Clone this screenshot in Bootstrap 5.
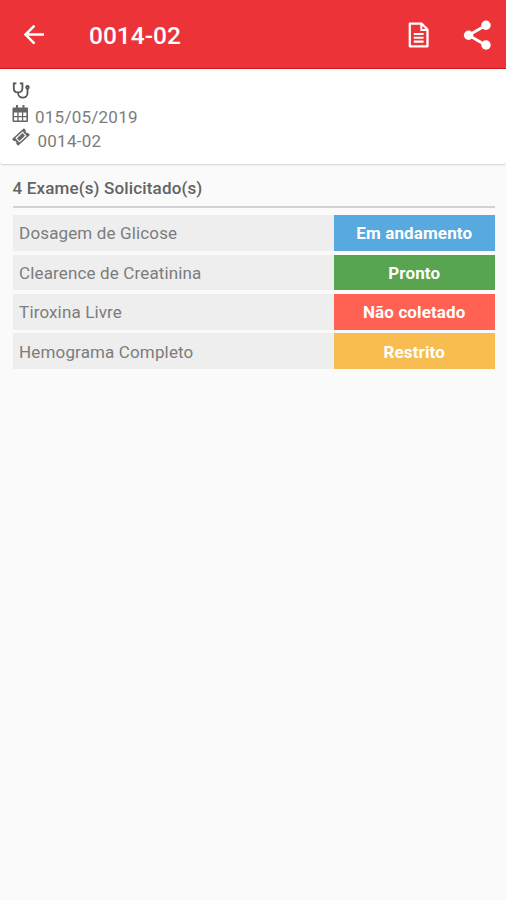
<!DOCTYPE html>
<html lang="pt-BR">
<head>
<meta charset="utf-8">
<meta name="viewport" content="width=device-width, initial-scale=1">
<title>0014-02</title>
<link href="https://cdn.jsdelivr.net/npm/bootstrap@5.3.0/dist/css/bootstrap.min.css" rel="stylesheet">
<style>
body{font-family:Roboto,"Liberation Sans",sans-serif;background:#fafafa;min-height:900px;color:#7c7c7c;overflow:hidden}
.app-bar{height:69px;background:#ec3338;border-bottom:1px solid #d8151b;padding:2px 12px 0 22px}
.app-bar svg{display:block}
.app-title{font-size:24.5px;line-height:30px;font-weight:500;margin-left:42px;padding-top:1px;letter-spacing:0}
.app-actions{gap:32px}
.info-panel{height:95px;background:#fff;padding:11px 12px 0;border-radius:0 0 3px 3px;box-shadow:0 1px 2px rgba(0,0,0,.16)}
.info-line{height:23.3px;font-size:17px;line-height:26px;letter-spacing:.25px}
.info-line svg{flex:none}
.info-line:first-child{height:24.3px}
.info-date{margin-left:6px}
.info-code{margin-left:7.5px}
.exam-area{padding:12px 11.5px 0 12.5px}
.exam-heading{font-size:17px;line-height:25px;font-weight:500;color:#636363;height:32px;border-bottom:2px solid #d2d2d2;margin-bottom:7.3px;letter-spacing:.15px}
.exam-list{gap:3.7px}
.exam-row{height:35.7px;background:#eee;font-size:17px}
.exam-name{padding-left:6.6px;letter-spacing:.14px;padding-top:2px}
.exam-status{width:160.5px;font-weight:700;padding-top:2px;letter-spacing:.12px}
.st-progress{background:#58a9e0}
.st-ready{background:#58a450}
.st-missing{background:#ff6152}
.st-restricted{background:#f7bd51}
</style>
</head>
<body>
<header class="app-bar d-flex align-items-center text-white">
  <svg width="25" height="25" viewBox="0 0 25 25" fill="none" stroke="currentColor" stroke-width="2.5"><path d="M22 11.6H4M12.5 2.6l-9 9 9 9"/></svg>
  <h1 class="app-title mb-0">0014-02</h1>
  <div class="app-actions d-flex align-items-center ms-auto">
    <svg width="22" height="28" viewBox="0 0 22 28" fill="none" stroke="currentColor"><path stroke-width="2.3" stroke-linejoin="round" d="M1.8 2.7h12l5.7 5.8v16.8H1.8z"/><path stroke-width="2" d="M13.3 3v6H19"/><path stroke-width="2.1" d="M5.8 13h9.8M5.8 16.8h9.8M5.8 20.6h9.8"/></svg>
    <svg width="32" height="34" viewBox="0 0 32 34" fill="currentColor"><path d="M24 7.2L6.6 17.2l17.4 10" fill="none" stroke="currentColor" stroke-width="2.8"/><circle cx="24" cy="7.2" r="4.7"/><circle cx="6.6" cy="17.2" r="4.7"/><circle cx="24" cy="27" r="4.7"/></svg>
  </div>
</header>
<main>
  <section class="info-panel">
    <div class="info-line">
      <svg class="d-block" width="19" height="20" viewBox="0 0 19 20" fill="none" stroke="#555" stroke-width="1.8"><path d="M4.4 3.4H1.8v5c0 5.3 8.6 5.3 8.6 0v-5H7.8M6.1 12.2v1c0 5.8 9.4 5.8 9.4 0V9"/><circle cx="15.5" cy="7.3" r="1.3"/></svg>
    </div>
    <div class="info-line d-flex">
      <svg width="17" height="19" viewBox="0 0 17 19" fill="#666"><path fill-rule="evenodd" d="M1.5 3.5H4V1h2v2.5h4.5V1h2v2.5H15q1 0 1 1V17q0 1-1 1H1.5q-1 0-1-1V4.500q0-1 1-1zM2 8.500v3.500h3.300v-3.500zm4.600 0v3.500H10v-3.500zm4.600 0v3.500h3.200v-3.500zM2 13.300v3.200h3.300v-3.200zm4.600 0v3.200H10v-3.200zm4.600 0v3.200h3.200v-3.200z"/></svg>
      <span class="info-date">015/05/2019</span>
    </div>
    <div class="info-line d-flex">
      <svg width="18" height="20" viewBox="0 0 18 20"><g transform="translate(9 9) rotate(-42)"><path fill="#666" fill-rule="evenodd" d="M-8-4.5h16v2.7q-2.6 1.8 0 3.6v2.7H-8V1.8q2.6-1.8 0-3.6zM-5-3v6H5v-6z"/><path fill="#666" d="M-3.8-1.8h7.6v3.6h-7.6z"/></g></svg>
      <span class="info-code">0014-02</span>
    </div>
  </section>
  <section class="exam-area">
    <h2 class="exam-heading">4 Exame(s) Solicitado(s)</h2>
    <div class="exam-list d-flex flex-column">
      <div class="exam-row d-flex"><div class="exam-name d-flex align-items-center flex-grow-1">Dosagem de Glicose</div><div class="exam-status st-progress text-white d-flex align-items-center justify-content-center">Em andamento</div></div>
      <div class="exam-row d-flex"><div class="exam-name d-flex align-items-center flex-grow-1">Clearence de Creatinina</div><div class="exam-status st-ready text-white d-flex align-items-center justify-content-center">Pronto</div></div>
      <div class="exam-row d-flex"><div class="exam-name d-flex align-items-center flex-grow-1">Tiroxina Livre</div><div class="exam-status st-missing text-white d-flex align-items-center justify-content-center">Não coletado</div></div>
      <div class="exam-row d-flex"><div class="exam-name d-flex align-items-center flex-grow-1">Hemograma Completo</div><div class="exam-status st-restricted text-white d-flex align-items-center justify-content-center">Restrito</div></div>
    </div>
  </section>
</main>
<script src="https://cdn.jsdelivr.net/npm/bootstrap@5.3.0/dist/js/bootstrap.bundle.min.js"></script>
</body>
</html>
